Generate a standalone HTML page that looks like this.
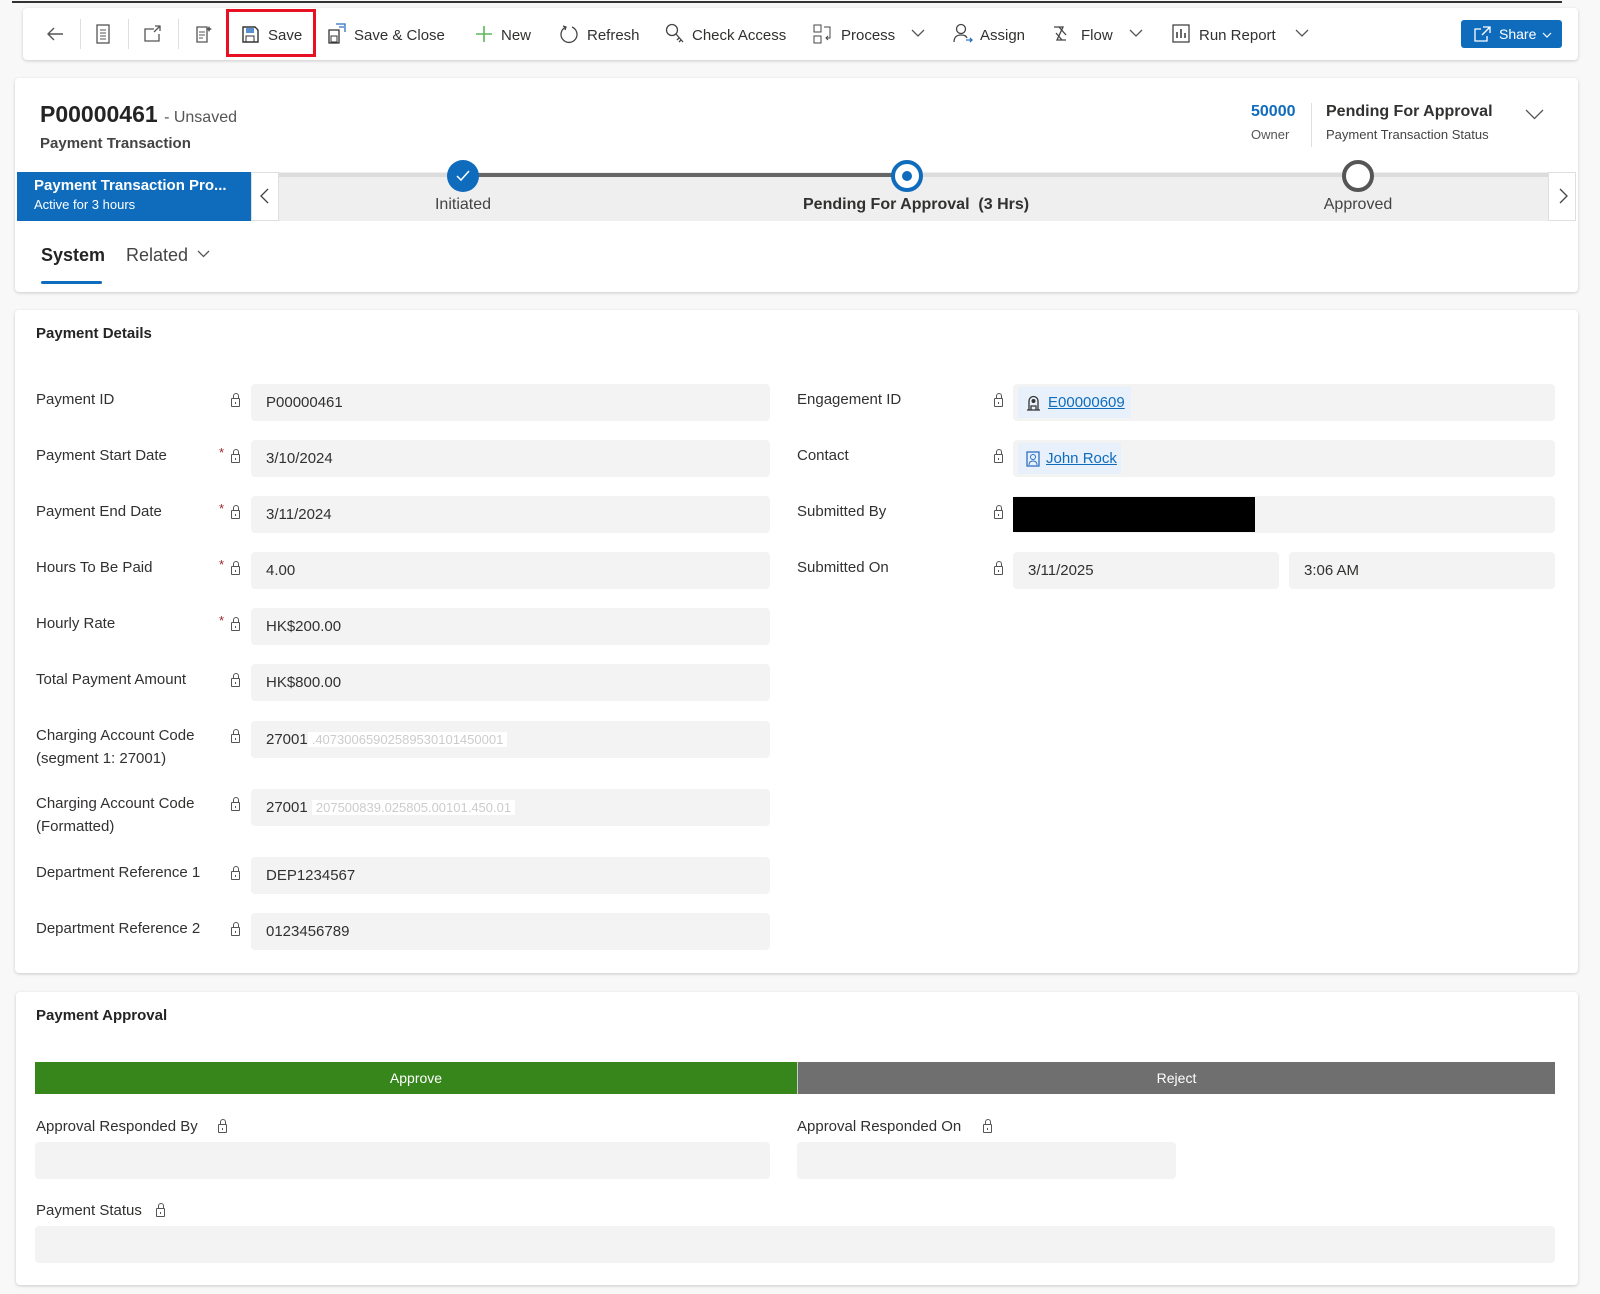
<!DOCTYPE html>
<html><head><meta charset="utf-8">
<style>
*{box-sizing:border-box;margin:0;padding:0}
body{width:1600px;height:1294px;background:#f8f8f8;font-family:"Liberation Sans",sans-serif;color:#323130;position:relative;overflow:hidden;font-size:15px}
.a{position:absolute}
.card{position:absolute;background:#fff;border-radius:4px;box-shadow:0 1px 3px rgba(0,0,0,.18)}
.tb{font-size:15px;color:#323130;white-space:nowrap}
.sep{position:absolute;width:1px;height:30px;background:#e1dfdd;top:19px}
.lbl{position:absolute;font-size:15px;color:#323130;line-height:23px}
.inp{position:absolute;background:#f3f3f3;border-radius:4px;height:37px;font-size:15px;line-height:38px;padding-left:15px;color:#323130}
.lock{position:absolute;width:9px;height:9px;border:1.3px solid #555;border-radius:1px}
.lock:before{content:"";position:absolute;left:1px;top:-6px;width:4px;height:5px;border:1.3px solid #555;border-bottom:none;border-radius:3px 3px 0 0}
.lock:after{content:"";position:absolute;left:2.5px;top:2.5px;width:1.5px;height:2px;background:#555}
.req{position:absolute;color:#a4262c;font-size:13px}
</style></head><body>
<div class="a" style="left:12px;top:1px;width:1550px;height:2px;background:#333"></div>

<!-- toolbar -->
<div class="card" style="left:23px;top:8px;width:1555px;height:52px"></div>
<svg class="a" style="left:45px;top:25px" width="20" height="18" viewBox="0 0 20 18"><path d="M18 9H3M9 3L3 9l6 6" fill="none" stroke="#555" stroke-width="1.4"/></svg>
<div class="sep" style="left:80px"></div>
<svg class="a" style="left:96px;top:24px" width="14" height="20"><rect x="1" y="1" width="12" height="18" fill="none" stroke="#555" stroke-width="1.3"/><path d="M4 6h6M4 9h6M4 12h6M4 15h6" stroke="#555"/></svg>
<div class="sep" style="left:128px"></div>
<svg class="a" style="left:143px;top:25px" width="20" height="18"><path d="M11 4H2v12h14V9" fill="none" stroke="#555" stroke-width="1.3"/><path d="M12 1h5v5M17 1l-6 6" fill="none" stroke="#555" stroke-width="1.3"/></svg>
<div class="sep" style="left:178px"></div>
<svg class="a" style="left:194px;top:24px" width="20" height="20"><path d="M3 3h10v15H3z" fill="none" stroke="#555" stroke-width="1.3"/><path d="M5 8h6M5 11h6M5 14h4" stroke="#555"/><path d="M15 2l1 2 2 1-2 1-1 2-1-2-2-1 2-1z" fill="#555"/></svg>
<div class="a" style="left:226px;top:9px;width:90px;height:48px;border:3px solid #e81123"></div>
<svg class="a" style="left:242px;top:26px" width="17" height="17"><path d="M1 1h12l3 3v12H1z" fill="none" stroke="#333" stroke-width="1.4"/><rect x="4" y="2" width="8" height="5" fill="#5a8fd0"/><rect x="4" y="10" width="8" height="6" fill="none" stroke="#333"/></svg>
<div class="a tb" style="left:268px;top:27px">Save</div>
<svg class="a" style="left:327px;top:22px" width="20" height="22"><path d="M2 8h10v13H2z" fill="none" stroke="#333" stroke-width="1.3"/><rect x="4" y="14" width="6" height="6" fill="none" stroke="#333"/><path d="M9 2h9v8M12 5h5" fill="none" stroke="#2b6fc2" stroke-width="1.3"/></svg>
<div class="a tb" style="left:354px;top:27px">Save &amp; Close</div>
<svg class="a" style="left:475px;top:25px" width="18" height="18"><path d="M9 1v16M1 9h16" stroke="#5cb85c" stroke-width="1.6"/></svg>
<div class="a tb" style="left:501px;top:27px">New</div>
<svg class="a" style="left:559px;top:24px" width="20" height="20"><path d="M7 3A8 8 0 1 0 13 3" fill="none" stroke="#444" stroke-width="1.3"/><path d="M4 2l3 1-1 3" fill="none" stroke="#444" stroke-width="1.3"/></svg>
<div class="a tb" style="left:587px;top:27px">Refresh</div>
<svg class="a" style="left:665px;top:23px" width="20" height="22"><circle cx="7" cy="7" r="5.5" fill="none" stroke="#444" stroke-width="1.3"/><path d="M11 11l7 8M14 15l-2 2M16 17l-2 2" stroke="#444" stroke-width="1.3"/></svg>
<div class="a tb" style="left:692px;top:27px">Check Access</div>
<svg class="a" style="left:813px;top:24px" width="20" height="20"><rect x="1" y="1" width="7" height="7" fill="none" stroke="#444"/><rect x="1" y="12" width="7" height="7" fill="none" stroke="#444"/><path d="M11 3h6v11h-4M15 12l-2 2 2 2" fill="none" stroke="#444"/></svg>
<div class="a tb" style="left:841px;top:27px">Process</div>
<svg class="a" style="left:911px;top:29px" width="14" height="9"><path d="M1 1l6 6 6-6" fill="none" stroke="#555" stroke-width="1.3"/></svg>
<svg class="a" style="left:953px;top:23px" width="20" height="20"><circle cx="8" cy="6" r="4.5" fill="none" stroke="#444" stroke-width="1.3"/><path d="M1 19c0-5 3-7 7-7s5 1 6 3" fill="none" stroke="#444" stroke-width="1.3"/><path d="M13 17h6M17 15l2 2-2 2" fill="none" stroke="#2b6fc2" stroke-width="1.3"/></svg>
<div class="a tb" style="left:980px;top:27px">Assign</div>
<svg class="a" style="left:1052px;top:25px" width="20" height="17"><path d="M2 2h9l-6 13h9M7 2l7 8M4 8l6 7" fill="none" stroke="#444" stroke-width="1.3"/></svg>
<div class="a tb" style="left:1081px;top:27px">Flow</div>
<svg class="a" style="left:1129px;top:29px" width="14" height="9"><path d="M1 1l6 6 6-6" fill="none" stroke="#555" stroke-width="1.3"/></svg>
<svg class="a" style="left:1172px;top:24px" width="18" height="19"><rect x="1" y="1" width="16" height="17" fill="none" stroke="#444" stroke-width="1.3"/><path d="M5 14V8M9 14V5M13 14V9" stroke="#444" stroke-width="1.6"/></svg>
<div class="a tb" style="left:1199px;top:27px">Run Report</div>
<svg class="a" style="left:1295px;top:29px" width="14" height="9"><path d="M1 1l6 6 6-6" fill="none" stroke="#555" stroke-width="1.3"/></svg>
<div class="a" style="left:1461px;top:20px;width:101px;height:28px;background:#0f6cbd;border-radius:3px;color:#fff;font-size:14px;line-height:28px;padding-left:38px">Share</div>
<svg class="a" style="left:1474px;top:26px" width="17" height="16"><path d="M7 3H1v12h12v-5M9 1h7v6M16 1L8 9" fill="none" stroke="#fff" stroke-width="1.3"/></svg>
<svg class="a" style="left:1542px;top:32px" width="10" height="6"><path d="M1 1l4 4 4-4" fill="none" stroke="#fff" stroke-width="1.2"/></svg>

<!-- header card -->
<div class="card" style="left:15px;top:78px;width:1563px;height:214px"></div>
<div class="a" style="left:40px;top:101px;font-size:23px;font-weight:bold;color:#242424">P00000461 <span style="font-size:16px;font-weight:normal;color:#555">- Unsaved</span></div>
<div class="a" style="left:40px;top:135px;font-size:15px;font-weight:bold;color:#444">Payment Transaction</div>
<div class="a" style="left:1251px;top:103px;font-size:16px;color:#0f6cbd;font-weight:bold">50000</div>
<div class="a" style="left:1251px;top:127px;font-size:13px;color:#555">Owner</div>
<div class="a" style="left:1311px;top:103px;width:1px;height:44px;background:#e1dfdd"></div>
<div class="a" style="left:1326px;top:103px;font-size:16px;font-weight:bold;color:#323130">Pending For Approval</div>
<div class="a" style="left:1326px;top:127px;font-size:13px;color:#444">Payment Transaction Status</div>
<svg class="a" style="left:1525px;top:109px" width="19" height="11"><path d="M1 1l8.5 8.5L18 1" fill="none" stroke="#555" stroke-width="1.3"/></svg>

<!-- BPF -->
<div class="a" style="left:279px;top:172px;width:1269px;height:49px;background:#efefef"></div>
<div class="a" style="left:279px;top:173px;width:1269px;height:4px;background:#dcdcdc"></div>
<div class="a" style="left:463px;top:173px;width:444px;height:4px;background:#666"></div>
<div class="a" style="left:17px;top:172px;width:234px;height:49px;background:#0f6cbd;color:#fff;padding:5px 0 0 17px"><div style="font-size:15px;font-weight:bold">Payment Transaction Pro...</div><div style="font-size:13px;margin-top:3px">Active for 3 hours</div></div>
<div class="a" style="left:251px;top:172px;width:28px;height:49px;background:#fff;border:1px solid #e1dfdd"></div>
<svg class="a" style="left:260px;top:188px" width="9" height="16"><path d="M8 1L1 8l7 7" fill="none" stroke="#444" stroke-width="1.3"/></svg>
<div class="a" style="left:1548px;top:172px;width:28px;height:49px;background:#fff;border:1px solid #e1dfdd"></div>
<svg class="a" style="left:1559px;top:188px" width="9" height="16"><path d="M1 1l7 7-7 7" fill="none" stroke="#444" stroke-width="1.3"/></svg>
<div class="a" style="left:447px;top:160px;width:32px;height:32px;border-radius:50%;background:#0f6cbd"></div>
<svg class="a" style="left:455px;top:169px" width="16" height="13"><path d="M2 7l4 4 8-9" fill="none" stroke="#fff" stroke-width="1.5"/></svg>
<div class="a" style="left:891px;top:160px;width:32px;height:32px;border-radius:50%;background:#fff;border:4px solid #0f6cbd"></div>
<div class="a" style="left:902px;top:171px;width:10px;height:10px;border-radius:50%;background:#0f6cbd"></div>
<div class="a" style="left:1342px;top:160px;width:32px;height:32px;border-radius:50%;background:#fff;border:4px solid #555"></div>
<div class="a" style="left:403px;top:196px;width:120px;text-align:center;font-size:16px;color:#444">Initiated</div>
<div class="a" style="left:803px;top:196px;font-size:16px;font-weight:bold;color:#323130;white-space:pre">Pending For Approval  (3 Hrs)</div>
<div class="a" style="left:1298px;top:196px;width:120px;text-align:center;font-size:16px;color:#444">Approved</div>

<div class="a" style="left:41px;top:245px;font-size:18px;font-weight:bold;color:#242424">System</div>
<div class="a" style="left:41px;top:281px;width:61px;height:3px;background:#0f6cbd;border-radius:2px"></div>
<div class="a" style="left:126px;top:245px;font-size:18px;color:#444">Related</div>
<svg class="a" style="left:197px;top:250px" width="13" height="8"><path d="M1 1l5.5 5.5L12 1" fill="none" stroke="#555" stroke-width="1.3"/></svg>

<!-- Payment details card -->
<div class="card" style="left:15px;top:310px;width:1563px;height:663px"></div>
<div class="a" style="left:36px;top:325px;font-size:15px;font-weight:bold;color:#242424">Payment Details</div>

<div class="lbl" style="left:36px;top:388px">Payment ID</div><div class="lock" style="left:231px;top:398px"></div><div class="inp" style="left:251px;top:384px;width:519px">P00000461</div>
<div class="lbl" style="left:36px;top:444px">Payment Start Date</div><div class="req" style="left:219px;top:445px">*</div><div class="lock" style="left:231px;top:454px"></div><div class="inp" style="left:251px;top:440px;width:519px">3/10/2024</div>
<div class="lbl" style="left:36px;top:500px">Payment End Date</div><div class="req" style="left:219px;top:501px">*</div><div class="lock" style="left:231px;top:510px"></div><div class="inp" style="left:251px;top:496px;width:519px">3/11/2024</div>
<div class="lbl" style="left:36px;top:556px">Hours To Be Paid</div><div class="req" style="left:219px;top:557px">*</div><div class="lock" style="left:231px;top:566px"></div><div class="inp" style="left:251px;top:552px;width:519px">4.00</div>
<div class="lbl" style="left:36px;top:612px">Hourly Rate</div><div class="req" style="left:219px;top:613px">*</div><div class="lock" style="left:231px;top:622px"></div><div class="inp" style="left:251px;top:608px;width:519px">HK$200.00</div>
<div class="lbl" style="left:36px;top:668px">Total Payment Amount</div><div class="lock" style="left:231px;top:678px"></div><div class="inp" style="left:251px;top:664px;width:519px">HK$800.00</div>
<div class="lbl" style="left:36px;top:724px">Charging Account Code<br>(segment 1: 27001)</div><div class="lock" style="left:231px;top:734px"></div><div class="inp" style="left:251px;top:721px;width:519px">27001<span style="background:#fff;color:#ccc;font-size:13px;padding:0 4px">.40730065902589530101450001</span></div>
<div class="lbl" style="left:36px;top:792px">Charging Account Code<br>(Formatted)</div><div class="lock" style="left:231px;top:802px"></div><div class="inp" style="left:251px;top:789px;width:519px">27001 <span style="background:#fff;color:#ccc;font-size:13px;padding:0 4px">207500839.025805.00101.450.01</span></div>
<div class="lbl" style="left:36px;top:861px">Department Reference 1</div><div class="lock" style="left:231px;top:871px"></div><div class="inp" style="left:251px;top:857px;width:519px">DEP1234567</div>
<div class="lbl" style="left:36px;top:917px">Department Reference 2</div><div class="lock" style="left:231px;top:927px"></div><div class="inp" style="left:251px;top:913px;width:519px">0123456789</div>

<div class="lbl" style="left:797px;top:388px">Engagement ID</div><div class="lock" style="left:994px;top:398px"></div><div class="inp" style="left:1013px;top:384px;width:542px;padding-left:5px"><span style="display:inline-block;background:#e8f1fb;height:31px;line-height:31px;margin-top:3px;padding:0 6px 0 30px;position:relative;vertical-align:top"><svg style="position:absolute;left:8px;top:7px" width="15" height="17"><path d="M3 16V7a4.5 4.5 0 0 1 9 0v9M1 16h13M5 16v-4h5v4" fill="none" stroke="#333" stroke-width="1.3"/><circle cx="7.5" cy="7" r="2" fill="#333"/></svg><span style="color:#0f6cbd;text-decoration:underline">E00000609</span></span></div>
<div class="lbl" style="left:797px;top:444px">Contact</div><div class="lock" style="left:994px;top:454px"></div><div class="inp" style="left:1013px;top:440px;width:542px;padding-left:5px"><span style="display:inline-block;background:#e8f1fb;height:31px;line-height:31px;margin-top:3px;padding:0 4px 0 28px;position:relative;vertical-align:top"><svg style="position:absolute;left:8px;top:8px" width="14" height="16"><rect x="1" y="1" width="12" height="14" fill="none" stroke="#2b6fc2" stroke-width="1.3"/><circle cx="7" cy="6" r="2.5" fill="none" stroke="#2b6fc2"/><path d="M3 14c0-3 2-4 4-4s4 1 4 4" fill="none" stroke="#2b6fc2"/></svg><span style="color:#0f6cbd;text-decoration:underline">John Rock</span></span></div>
<div class="lbl" style="left:797px;top:500px">Submitted By</div><div class="lock" style="left:994px;top:510px"></div><div class="inp" style="left:1013px;top:496px;width:542px"></div><div class="a" style="left:1013px;top:497px;width:242px;height:35px;background:#000"></div>
<div class="lbl" style="left:797px;top:556px">Submitted On</div><div class="lock" style="left:994px;top:566px"></div><div class="inp" style="left:1013px;top:552px;width:266px">3/11/2025</div><div class="inp" style="left:1289px;top:552px;width:266px">3:06 AM</div>

<!-- Approval card -->
<div class="card" style="left:16px;top:992px;width:1562px;height:293px"></div>
<div class="a" style="left:36px;top:1007px;font-size:15px;font-weight:bold;color:#242424">Payment Approval</div>
<div class="a" style="left:35px;top:1062px;width:762px;height:32px;background:#37861b;color:#fff;text-align:center;line-height:32px;font-size:14px">Approve</div>
<div class="a" style="left:797px;top:1062px;width:758px;height:32px;background:#6f6f6f;color:#fff;text-align:center;line-height:32px;font-size:14px;border-left:1px solid #ccc">Reject</div>
<div class="lbl" style="left:36px;top:1115px">Approval Responded By</div><div class="lock" style="left:218px;top:1124px"></div>
<div class="inp" style="left:35px;top:1142px;width:735px"></div>
<div class="lbl" style="left:797px;top:1115px">Approval Responded On</div><div class="lock" style="left:983px;top:1124px"></div>
<div class="inp" style="left:797px;top:1142px;width:379px"></div>
<div class="lbl" style="left:36px;top:1199px">Payment Status</div><div class="lock" style="left:156px;top:1208px"></div>
<div class="inp" style="left:35px;top:1226px;width:1520px"></div>
</body></html>
